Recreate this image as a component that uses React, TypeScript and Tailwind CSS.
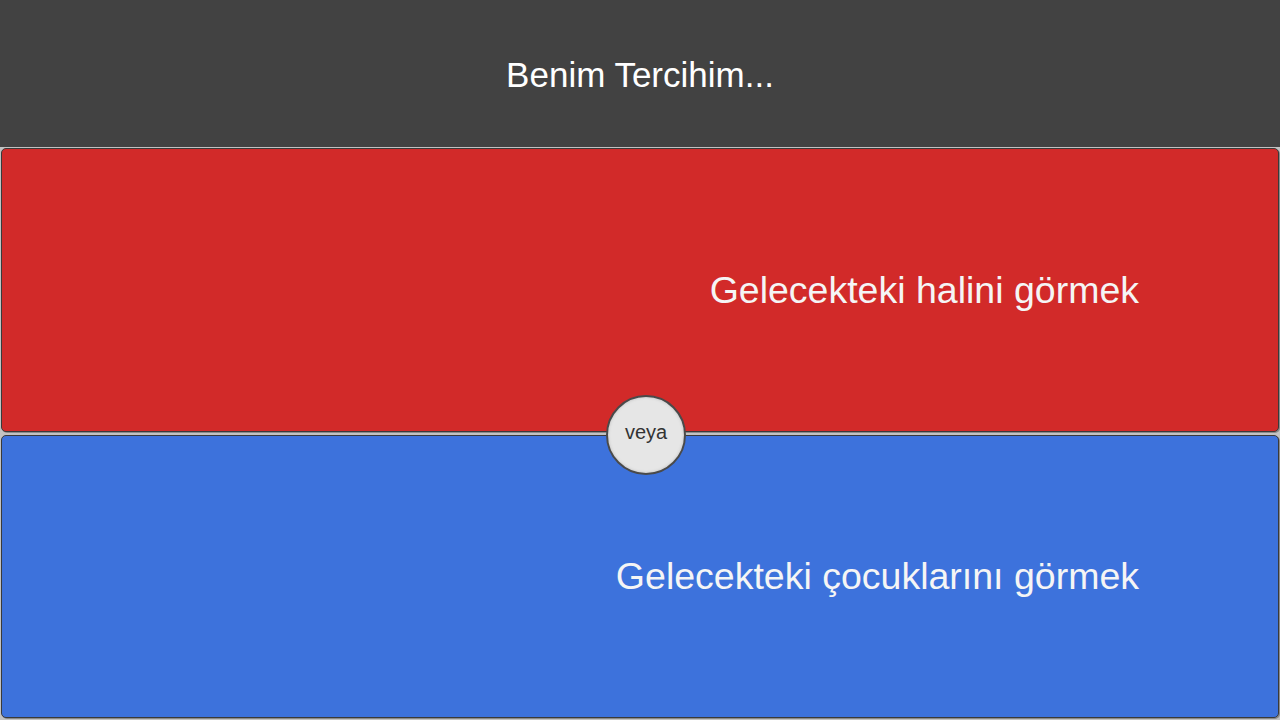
export default function App() {
  return (
    <div className="relative flex h-[720px] w-[1280px] flex-col bg-[#c2c2c2] font-['Liberation_Sans',Arial,sans-serif]">
      {/* header */}
      <div className="flex h-[147px] shrink-0 items-center justify-center bg-[#424242] pt-[4px]">
        <h1 className="text-[35px] text-white">Benim Tercihim...</h1>
      </div>

      {/* choices */}
      <div className="flex flex-1 flex-col gap-[3px] px-px pb-[2px] pt-px">
        <button className="flex flex-1 items-center justify-end rounded-[5px] border border-[#3a3a3a] bg-[#d22a29] pr-[139px] shadow-[1px_1px_0_#8a8a8a]">
          <span className="text-[37.5px] text-[#f5f5f5]">Gelecekteki halini görmek</span>
        </button>
        <button className="flex flex-1 items-center justify-end rounded-[5px] border border-[#3a3a3a] bg-[#3d72dc] pr-[139px] shadow-[1px_1px_0_#8a8a8a]">
          <span className="text-[37.5px] text-[#f5f5f5]">Gelecekteki çocuklarını görmek</span>
        </button>
      </div>

      {/* "or" badge */}
      <div className="absolute left-[606px] top-[395px] flex h-[80px] w-[80px] items-center justify-center rounded-full border-2 border-[#4a4a4a] bg-[#e6e6e6] pb-[6px] shadow-[inset_0_0_3px_#bdbdbd]">
        <span className="text-[20px] text-[#333333]">veya</span>
      </div>
    </div>
  )
}
